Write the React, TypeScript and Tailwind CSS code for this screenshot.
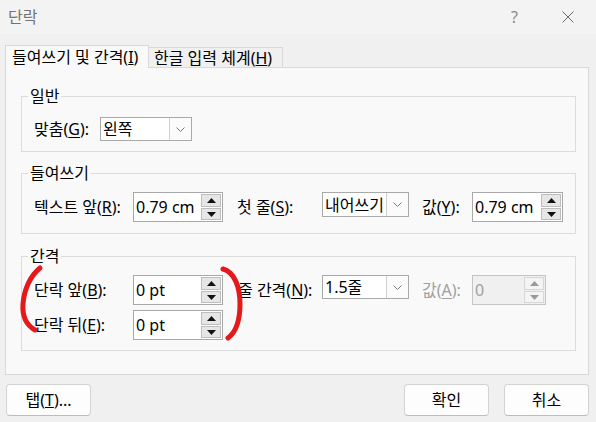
import React from "react";

const font = { fontFamily: '"Noto Sans", "Noto Sans CJK KR", sans-serif' };

// label with an underlined access key, e.g. 맞춤(G):
function Label({ text, k, rest = "):", className = "", dim = false }: { text: string; k: string; rest?: string; className?: string; dim?: boolean }) {
  return (
    <span className={`shrink-0 whitespace-nowrap ${dim ? "text-[#a0a0a0]" : "text-black"} ${className}`}>
      {text}(<u className="underline-offset-2">{k}</u>
      {rest}
    </span>
  );
}

function Arrow({ up, dim }: { up: boolean; dim?: boolean }) {
  return (
    <svg width="9" height="5" viewBox="0 0 9 5">
      <polygon points={up ? "0,5 9,5 4.5,0" : "0,0 9,0 4.5,5"} fill={dim ? "#9a9a9a" : "#111"} />
    </svg>
  );
}

function Spin({ value, className, disabled = false }: { value: string; className: string; disabled?: boolean }) {
  return (
    <div
      className={`flex h-[30px] shrink-0 items-stretch border ${
        disabled ? "border-[#c4c4c4] bg-[#f0f0f0] text-[#a0a0a0]" : "border-[#a9a9a9] bg-white text-black"
      } ${className}`}
    >
      <div className="flex flex-1 items-center pl-[2px] leading-none">{value}</div>
      <div className="mr-[1px] flex w-[20px] flex-col justify-center gap-[1px]">
        <div className={`flex h-[13px] items-center justify-center border ${disabled ? "border-[#d6d6d6] bg-[#f4f4f4]" : "border-[#bdbdbd] bg-[#e6e6e6]"}`}>
          <Arrow up dim={disabled} />
        </div>
        <div className={`flex h-[12px] items-center justify-center border ${disabled ? "border-[#d6d6d6] bg-[#f4f4f4]" : "border-[#bdbdbd] bg-[#e6e6e6]"}`}>
          <Arrow up={false} dim={disabled} />
        </div>
      </div>
    </div>
  );
}

function Combo({ value, className }: { value: string; className: string }) {
  return (
    <div className={`flex shrink-0 items-stretch border border-[#a9a9a9] bg-white ${className}`}>
      <div className="flex flex-1 items-center pl-[2px] leading-none">{value}</div>
      <div className="flex w-[22px] items-center justify-center border-l border-[#cfcfcf] bg-[#fbfbfb]">
        <svg width="9" height="5" viewBox="0 0 9 5">
          <polyline points="0.5,0.5 4.5,4.5 8.5,0.5" fill="none" stroke="#7a7a7a" strokeWidth="1" />
        </svg>
      </div>
    </div>
  );
}

function Group({ title, className, children }: { title: string; className: string; children: React.ReactNode }) {
  return (
    <fieldset className={`ml-[15px] w-[555px] border border-[#dcdcdc] pl-[12px] ${className}`}>
      <legend className="-ml-[6px] px-[2px] leading-[20px] text-black">{title}</legend>
      {children}
    </fieldset>
  );
}

function Btn({ children, className = "" }: { children: React.ReactNode; className?: string }) {
  return (
    <button className={`flex h-[32px] w-[85px] items-center justify-center rounded-[4px] border border-[#d3d3d3] border-b-[#bcbcbc] bg-[#fdfdfd] text-black ${className}`}>
      {children}
    </button>
  );
}

export default function App() {
  return (
    <div className="relative h-[422px] w-[596px] overflow-hidden bg-[#f0f0f0] text-[16px] leading-[20px]" style={font}>
      {/* title bar */}
      <div className="flex h-[34px] items-center bg-[#f3f3f3] pl-[8px]">
        <span className="text-[16px] text-[#737373]">단락</span>
        <span className="ml-auto mr-[44px] text-[16px] text-[#8a8a8a]">?</span>
        <svg className="mr-[22px]" width="12" height="12" viewBox="0 0 12 12">
          <path d="M0.5 0.5 L11.5 11.5 M11.5 0.5 L0.5 11.5" stroke="#6a6a6a" strokeWidth="1" />
        </svg>
      </div>

      {/* tabs */}
      <div className="mt-[11px] flex items-end pl-[5px]">
        <div className="relative z-10 -mb-px flex h-[23px] w-[144px] items-center border border-b-0 border-[#d9d9d9] bg-[#f9f9f9] pl-[6px]">
          들여쓰기 및 간격(<u>I</u>)
        </div>
        <div className="flex h-[20px] w-[134px] items-center border border-b-0 border-l-0 border-[#d9d9d9] bg-[#f0f0f0] pl-[5px] pt-[1px]">
          한글 입력 체계(<u>H</u>)
        </div>
      </div>

      {/* tab panel */}
      <div className="ml-[5px] h-[308px] w-[584px] border border-[#d9d9d9] bg-[#f9f9f9] pt-[18px]">
        <Group title="일반" className="h-[66px]">
          <div className="mt-[11px] flex items-center">
            <Label text="맞춤" k="G" className="w-[66px]" />
            <Combo value="왼쪽" className="h-[24px] w-[92px]" />
          </div>
        </Group>

        <Group title="들여쓰기" className="mt-[11px] h-[71px]">
          <div className="mt-[9px] flex items-start">
            <Label text="텍스트 앞" k="R" className="mt-[5px] w-[99px]" />
            <Spin value="0.79 cm" className="w-[90px]" />
            <Label text="첫 줄" k="S" className="ml-[14px] mt-[5px] w-[85px]" />
            <Combo value="내어쓰기" className="h-[25px] w-[87px]" />
            <Label text="값" k="Y" className="ml-[13px] mt-[5px] w-[50px]" />
            <Spin value="0.79 cm" className="w-[91px]" />
          </div>
        </Group>

        <Group title="간격" className="mt-[12px] h-[105px]">
          <div className="mt-[9px] flex items-start">
            <Label text="단락 앞" k="B" className="mt-[5px] w-[99px]" />
            <Spin value="0 pt" className="w-[90px]" />
            <Label text="줄 간격" k="N" className="ml-[15px] mt-[5px] w-[84px]" />
            <Combo value="1.5줄" className="h-[24px] w-[87px]" />
            <Label text="값" k="A" dim className="ml-[13px] mt-[5px] w-[50px]" />
            <Spin value="0" disabled className="w-[74px]" />
          </div>
          <div className="mt-[5px] flex items-start">
            <Label text="단락 뒤" k="E" className="mt-[5px] w-[99px]" />
            <Spin value="0 pt" className="w-[90px]" />
          </div>
        </Group>
      </div>

      {/* buttons */}
      <div className="mt-[9px] flex pl-[6px]">
        <Btn>
          탭(<u>T</u>)...
        </Btn>
        <Btn className="ml-auto">확인</Btn>
        <Btn className="ml-[15px] mr-[7px]">취소</Btn>
      </div>

      {/* red pen marks drawn over the dialog */}
      <svg className="pointer-events-none absolute left-0 top-0" width="596" height="422" viewBox="0 0 596 422">
        <path d="M40 268 C30 276 24 290 23 304 C22 318 28 326 35 330" fill="none" stroke="#e3191c" strokeWidth="5" strokeLinecap="round" />
        <path d="M223 269 C234 272 240 286 240 304 C240 322 236 332 228 338" fill="none" stroke="#e3191c" strokeWidth="5" strokeLinecap="round" />
      </svg>
    </div>
  );
}
